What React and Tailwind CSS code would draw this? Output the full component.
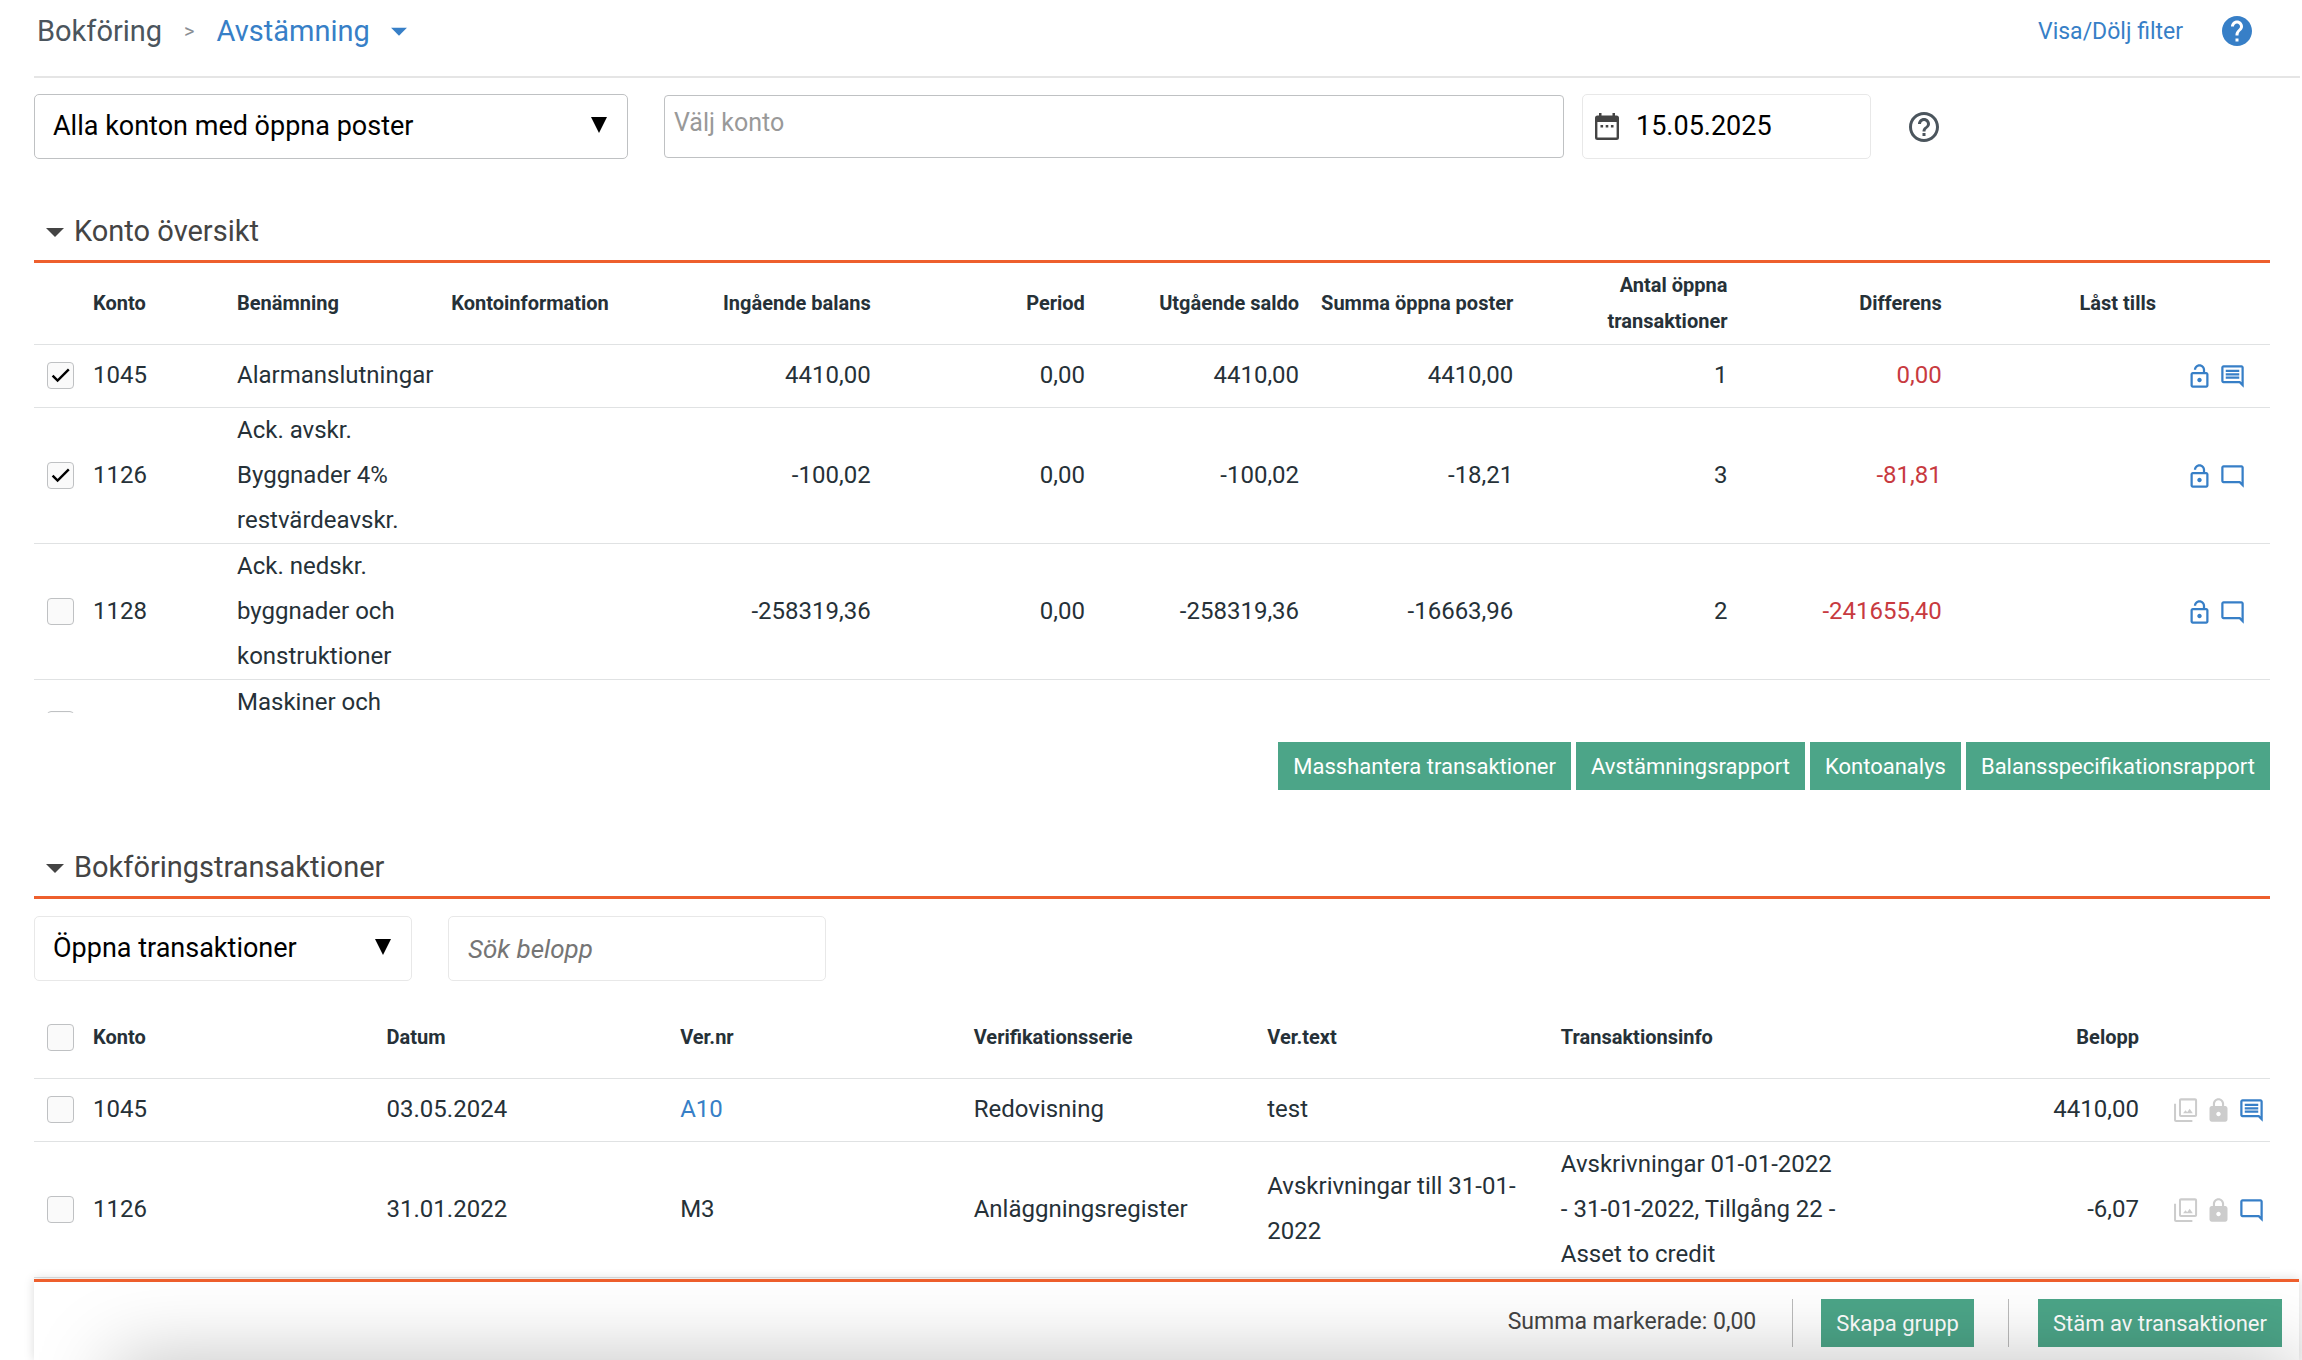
import React, { useState } from 'react';
import {
    MdHelp,
    MdHelpOutline,
    MdArrowDropDown,
    MdOutlineLockOpen,
    MdOutlineComment,
    MdOutlineModeComment,
    MdLock,
} from 'react-icons/md';

const accounts = [
    { konto: '1045', name: 'Alarmanslutningar', inBalance: '4410,00', period: '0,00', outBalance: '4410,00', sum: '4410,00', count: '1', diff: '0,00', checked: true, hasComment: true },
    { konto: '1126', name: 'Ack. avskr. Byggnader 4% restvärdeavskr.', inBalance: '-100,02', period: '0,00', outBalance: '-100,02', sum: '-18,21', count: '3', diff: '-81,81', checked: true },
    { konto: '1128', name: 'Ack. nedskr. byggnader och konstruktioner', inBalance: '-258319,36', period: '0,00', outBalance: '-258319,36', sum: '-16663,96', count: '2', diff: '-241655,40' },
];

const transactions = [
    { konto: '1045', date: '03.05.2024', nr: 'A10', link: true, serie: 'Redovisning', text: 'test', info: '', amount: '4410,00', hasComment: true },
    { konto: '1126', date: '31.01.2022', nr: 'M3', serie: 'Anläggningsregister', text: 'Avskrivningar till 31-01-2022', info: 'Avskrivningar 01-01-2022 - 31-01-2022, Tillgång 22 - Asset to credit', amount: '-6,07' },
];

const Checkbox = ({ label, defaultChecked }) => (
    <label className="relative ml-[13px] block h-[27px] w-[27px]">
        <input
            type="checkbox"
            aria-label={label}
            defaultChecked={defaultChecked}
            className="peer block h-[27px] w-[27px] appearance-none rounded-[4px] border border-[#bfc1c3] bg-[#fafafa]"
        />
        <svg viewBox="0 0 27 27" className="pointer-events-none absolute inset-0 hidden h-[27px] w-[27px] peer-checked:block" fill="none" stroke="#000" strokeWidth="2.4">
            <path d="M5.6 13.6l5 5L21.8 7.4" />
        </svg>
    </label>
);

const GreenButton = ({ children }) => (
    <button type="button" className="h-12 bg-[#4ca588] px-[15px] text-[22px] whitespace-nowrap text-white">
        {children}
    </button>
);

const SectionTitle = ({ children }) => (
    <h2 className="border-b-3 border-[#ee5f2d]">
        <button type="button" className="flex h-[60px] items-center pt-0.5 text-[29px] text-[#444]">
            <svg viewBox="0 0 18 9" className="mt-0.5 mr-2.5 ml-3 h-[9px] w-[18px]" fill="currentColor">
                <path d="M0 0h18l-9 9z" />
            </svg>
            {children}
        </button>
    </h2>
);

const CommentIcon = ({ filled }) => (
    <button type="button" aria-label="Kommentar">
        {filled ? <MdOutlineComment size={27} /> : <MdOutlineModeComment size={27} />}
    </button>
);

const ImagesIcon = () => (
    <svg viewBox="0 0 24 24" className="h-[27px] w-[27px]" fill="currentColor">
        <path d="M20.500 3v13H8V3h12.500m0-1.800H8c-1 0-1.800.8-1.800 1.800v13c0 1 .8 1.800 1.800 1.800h12.500c1 0 1.800-.8 1.800-1.800V3c0-1-.8-1.800-1.800-1.800zM1.800 6v14.500c0 1 .8 1.800 1.800 1.800h14.500v-1.800H3.600V6z" />
        <path d="M9.800 14.500l2.200-2.700 1.500 1.700 2.200-3 2.800 4z" />
    </svg>
);

const CalendarIcon = () => (
    <svg viewBox="0 0 24 27" className="h-[27px] w-6 shrink-0" fill="currentColor" fillRule="evenodd">
        <path d="M4 0h2.500v2.500h11V0H20v2.500h1.500A2.500 2.500 0 0 1 24 5v19.500a2.500 2.500 0 0 1-2.500 2.500h-19A2.500 2.500 0 0 1 0 24.500V5a2.500 2.500 0 0 1 2.500-2.500H4zM2.400 9v15.500h19.200V9zM5.500 12h2.600v2.600H5.500zM10.700 12h2.600v2.600h-2.600zM15.900 12h2.600v2.600h-2.600z" />
    </svg>
);

const Select = ({ label, value, options, className }) => {
    const [selected, setSelected] = useState(value);
    return (
        <div className={`relative ${className}`}>
            <select
                aria-label={label}
                value={selected}
                onChange={(e) => setSelected(e.target.value)}
                className="h-full w-full appearance-none rounded-[5px] border border-inherit bg-white pr-14 pl-[18px] text-[27px] text-black"
            >
                {options.map((o) => (
                    <option key={o}>{o}</option>
                ))}
            </select>
            <svg viewBox="0 0 16 16" className="pointer-events-none absolute top-[23px] right-[21px] h-4 w-4">
                <path d="M0 0h16l-8 16z" />
            </svg>
        </div>
    );
};

const th = 'text-[20px] leading-9 font-bold';

export default function App() {
    return (
        <div className="flex min-h-screen flex-col overflow-hidden bg-white pl-[34px] font-[Roboto,sans-serif] text-[24px] leading-[45px] text-[#263138]">
            <header className="mr-0.5 flex h-[78px] items-center justify-between border-b-2 border-[#e5e5e5] pr-[45px] pb-3.5 pl-[3px]">
                <nav className="flex items-center text-[29px]">
                    <a href="#bokforing" className="text-[#4b555d]">Bokföring</a>
                    <span className="mx-[22px] text-[20px] text-[#8a8f94]">&gt;</span>
                    <a href="#avstamning" className="flex items-center text-[#377fc7]">
                        Avstämning
                        <MdArrowDropDown size={38} className="ml-2.5" />
                    </a>
                </nav>
                <div className="flex items-center gap-9 text-[23px] text-[#377fc7]">
                    <a href="#filter">Visa/Dölj filter</a>
                    <button type="button" aria-label="Hjälp">
                        <MdHelp size={36} />
                    </button>
                </div>
            </header>

            <div className="mt-4 flex h-[65px] items-center pr-8">
                <Select
                    label="Konton"
                    value="Alla konton med öppna poster"
                    options={['Alla konton med öppna poster', 'Alla konton']}
                    className="h-[65px] w-[594px] border-[#bfc1c3]"
                />
                <input
                    aria-label="Välj konto"
                    placeholder="Välj konto"
                    className="ml-9 h-[63px] w-[900px] rounded-[4px] border border-[#bfc1c3] px-[9px] pb-2 text-[25px] placeholder:text-[#999]"
                />
                <label className="ml-[18px] flex h-[65px] w-[289px] items-center gap-[17px] rounded-[5px] border border-[#e8e8e8] pl-3 text-[#444]">
                    <CalendarIcon />
                    <input aria-label="Datum" defaultValue="15.05.2025" className="w-full min-w-0 text-[27px] text-black" />
                </label>
                <button type="button" aria-label="Hjälp om filter" className="ml-[35px] text-[#4b555d]">
                    <MdHelpOutline size={36} />
                </button>
            </div>

            <section className="mt-[41px] mr-8">
                <SectionTitle>Konto översikt</SectionTitle>
                <div className="h-[450px] overflow-hidden">
                    <table className="w-full table-fixed">
                        <colgroup>
                            <col className="w-[50px]" />
                            <col className="w-[144px]" />
                            <col span={9} />
                            <col className="w-[114px]" />
                        </colgroup>
                        <thead>
                            <tr className="h-[81px] border-b border-[#e0e2e3]">
                                <td />
                                <th className={`${th} pl-[9px] text-left`}>Konto</th>
                                <th className={`${th} pl-[9px] text-left`}>Benämning</th>
                                <th className={`${th} pl-[9px] text-left`}>Kontoinformation</th>
                                <th className={`${th} text-right`}>Ingående balans</th>
                                <th className={`${th} text-right`}>Period</th>
                                <th className={`${th} text-right`}>Utgående saldo</th>
                                <th className={`${th} text-right whitespace-nowrap`}>Summa öppna poster</th>
                                <th className={`${th} pl-16 text-right`}>Antal öppna transaktioner</th>
                                <th className={`${th} text-right`}>Differens</th>
                                <th className={`${th} text-right`}>Låst tills</th>
                                <td />
                            </tr>
                        </thead>
                        <tbody>
                            {accounts.map((a) => (
                                <tr key={a.konto} className="h-[63px] border-b border-[#e0e2e3]">
                                    <td><Checkbox label={`Välj konto ${a.konto}`} defaultChecked={a.checked} /></td>
                                    <td className="pl-[9px]">{a.konto}</td>
                                    <td className="pl-[9px]">{a.name}</td>
                                    <td />
                                    <td className="text-right">{a.inBalance}</td>
                                    <td className="text-right">{a.period}</td>
                                    <td className="text-right">{a.outBalance}</td>
                                    <td className="text-right">{a.sum}</td>
                                    <td className="text-right">{a.count}</td>
                                    <td className="text-right text-[#c83a3f]">{a.diff}</td>
                                    <td />
                                    <td>
                                        <div className="flex justify-end gap-1.5 pt-0.5 pr-6 text-[#377fc7]">
                                            <button type="button" aria-label="Lås upp"><MdOutlineLockOpen size={27} /></button>
                                            <CommentIcon filled={a.hasComment} />
                                        </div>
                                    </td>
                                </tr>
                            ))}
                            <tr className="h-[90px]">
                                <td><Checkbox label="Välj konto" /></td>
                                <td />
                                <td className="pl-[9px] align-top">Maskiner och</td>
                                <td colSpan={9} />
                            </tr>
                        </tbody>
                    </table>
                </div>
                <div className="mt-[29px] flex justify-end gap-[5px]">
                    <GreenButton>Masshantera transaktioner</GreenButton>
                    <GreenButton>Avstämningsrapport</GreenButton>
                    <GreenButton>Kontoanalys</GreenButton>
                    <GreenButton>Balansspecifikationsrapport</GreenButton>
                </div>
            </section>

            <section className="mt-[46px] mr-8">
                <SectionTitle>Bokföringstransaktioner</SectionTitle>
                <div className="mt-[17px] flex gap-9">
                    <Select
                        label="Transaktioner"
                        value="Öppna transaktioner"
                        options={['Öppna transaktioner', 'Alla transaktioner']}
                        className="h-[65px] w-[378px] border-[#e8e8e8]"
                    />
                    <input
                        aria-label="Sök belopp"
                        placeholder="Sök belopp"
                        className="h-[65px] w-[378px] rounded-[5px] border border-[#e8e8e8] px-[19px] text-[26px] placeholder:text-[#757575] placeholder:italic"
                    />
                </div>
                <table className="mt-4 w-full table-fixed">
                    <colgroup>
                        <col className="w-[50px]" />
                        <col span={7} />
                        <col className="w-[131px]" />
                    </colgroup>
                    <thead>
                        <tr className="h-[81px] border-b border-[#e0e2e3]">
                            <td><Checkbox label="Välj alla" /></td>
                            <th className={`${th} pl-[9px] text-left`}>Konto</th>
                            <th className={`${th} pl-[9px] text-left`}>Datum</th>
                            <th className={`${th} pl-[9px] text-left`}>Ver.nr</th>
                            <th className={`${th} pl-[9px] text-left`}>Verifikationsserie</th>
                            <th className={`${th} pl-[9px] text-left`}>Ver.text</th>
                            <th className={`${th} pl-[9px] text-left`}>Transaktionsinfo</th>
                            <th className={`${th} text-right`}>Belopp</th>
                            <td />
                        </tr>
                    </thead>
                    <tbody>
                        {transactions.map((t) => (
                            <tr key={t.nr} className="h-[63px] border-b border-[#e0e2e3]">
                                <td><Checkbox label={`Välj ${t.nr}`} /></td>
                                <td className="pl-[9px]">{t.konto}</td>
                                <td className="pl-[9px]">{t.date}</td>
                                <td className="pl-[9px]">
                                    {t.link ? <a href="#a10" className="text-[#377fc7]">{t.nr}</a> : t.nr}
                                </td>
                                <td className="pl-[9px]">{t.serie}</td>
                                <td className="pl-[9px]">{t.text}</td>
                                <td className="pr-1.5 pl-[9px]">{t.info}</td>
                                <td className="text-right">{t.amount}</td>
                                <td>
                                    <div className="flex justify-end gap-1.5 pt-0.5 pr-[5px] text-[#ccc]">
                                        <button type="button" aria-label="Bilder"><ImagesIcon /></button>
                                        <button type="button" aria-label="Låst"><MdLock size={27} /></button>
                                        <span className="flex text-[#377fc7]"><CommentIcon filled={t.hasComment} /></span>
                                    </div>
                                </td>
                            </tr>
                        ))}
                    </tbody>
                </table>
            </section>

            <footer className="relative mt-auto mr-[3px] flex h-[81px] items-start justify-end border-t-3 border-[#ee5f2d] bg-white pt-[17px] pr-[17px] text-[23px] text-[#444] shadow-[0_0_10px_rgba(0,0,0,0.15)]">
                <span className="mr-9">Summa markerade: 0,00</span>
                <div className="mr-7 h-12 w-px bg-[#bbb]" />
                <GreenButton>Skapa grupp</GreenButton>
                <div className="mr-[29px] ml-[34px] h-12 w-px bg-[#bbb]" />
                <GreenButton>Stäm av transaktioner</GreenButton>
                {/* soft shade rising from the bottom edge */}
                <div className="pointer-events-none absolute top-full right-0 left-[80px] h-20 shadow-[0_0_80px_rgba(0,0,0,0.25)]" />
            </footer>
        </div>
    );
}
